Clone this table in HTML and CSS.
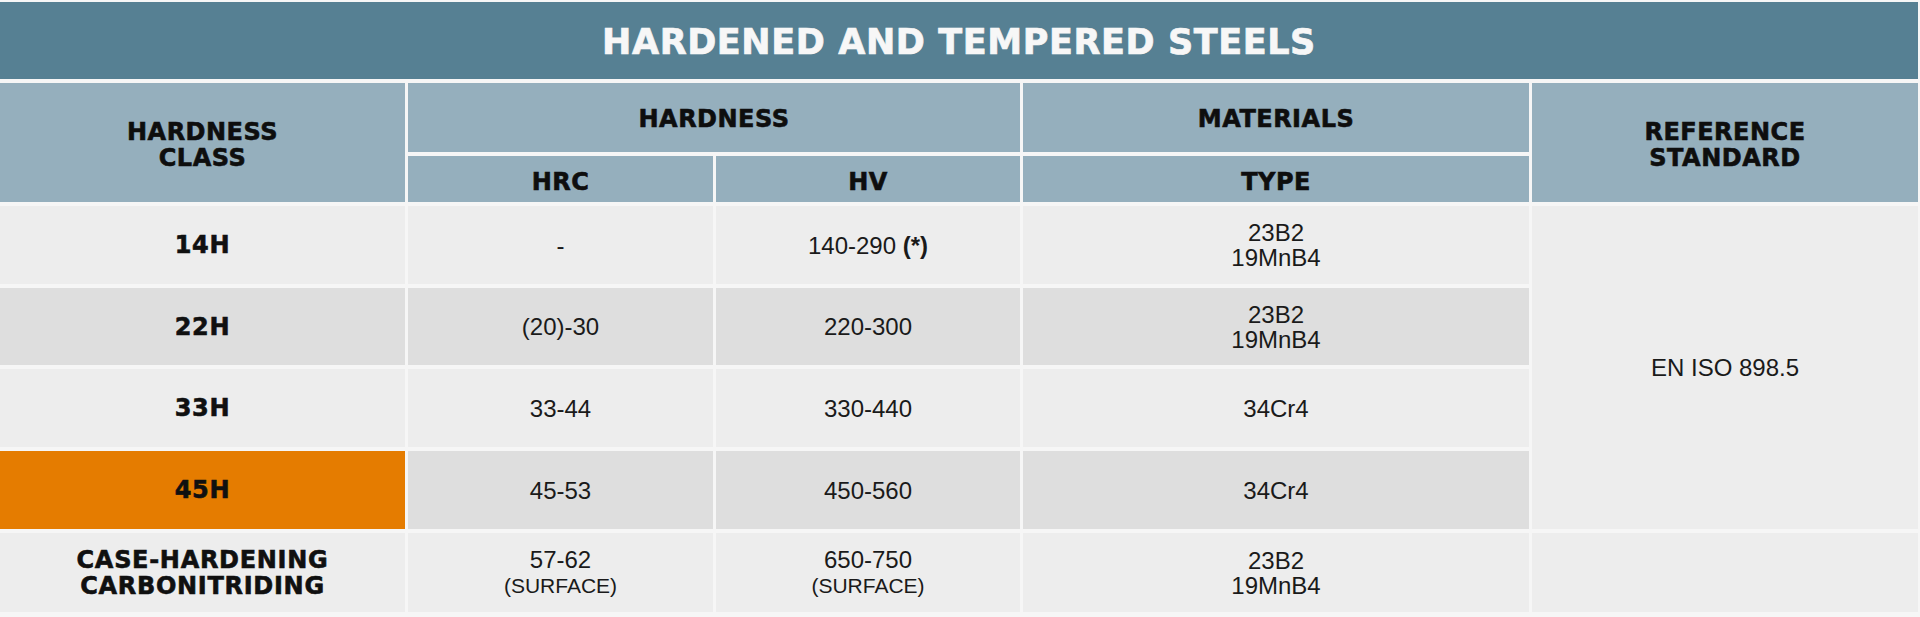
FILE: index.html
```html
<!DOCTYPE html>
<html lang="en">
<head>
<meta charset="utf-8">
<title>Hardened and Tempered Steels</title>
<link rel="stylesheet" href="styles.css">
</head>
<body>
<div class="sheet">
  <div class="title"><span>HARDENED AND TEMPERED STEELS</span></div>
  <div class="grid">
    <div class="cell head span-h2"><p>HARDNESS<br>CLASS</p></div>
    <div class="cell head span-c2"><p>HARDNESS</p></div>
    <div class="cell head"><p>MATERIALS</p></div>
    <div class="cell head span-h2"><p>REFERENCE<br>STANDARD</p></div>
    <div class="cell head sub"><p>HRC</p></div>
    <div class="cell head sub"><p>HV</p></div>
    <div class="cell head sub"><p>TYPE</p></div>

    <div class="cell light cls"><p>14H</p></div>
    <div class="cell light val"><p>-</p></div>
    <div class="cell light val"><p>140-290 <b>(*)</b></p></div>
    <div class="cell light val"><p>23B2<br>19MnB4</p></div>
    <div class="cell light val std"><p>EN ISO 898.5</p></div>

    <div class="cell dark cls"><p>22H</p></div>
    <div class="cell dark val"><p>(20)-30</p></div>
    <div class="cell dark val"><p>220-300</p></div>
    <div class="cell dark val"><p>23B2<br>19MnB4</p></div>

    <div class="cell light cls"><p>33H</p></div>
    <div class="cell light val"><p>33-44</p></div>
    <div class="cell light val"><p>330-440</p></div>
    <div class="cell light val"><p>34Cr4</p></div>

    <div class="cell orange cls"><p>45H</p></div>
    <div class="cell dark val"><p>45-53</p></div>
    <div class="cell dark val"><p>450-560</p></div>
    <div class="cell dark val"><p>34Cr4</p></div>

    <div class="cell light cls"><p>CASE-HARDENING<br>CARBONITRIDING</p></div>
    <div class="cell light val"><p>57-62<br><span class="small">(SURFACE)</span></p></div>
    <div class="cell light val"><p>650-750<br><span class="small">(SURFACE)</span></p></div>
    <div class="cell light val"><p>23B2<br>19MnB4</p></div>
    <div class="cell light"></div>
  </div>
</div>
</body>
</html>
```

FILE: styles.css
```css
html, body {
  margin: 0;
  padding: 0;
  background: #f6f6f6;
}

.sheet {
  width: 1918px;
  padding-top: 2px;
}

.title {
  height: 77px;
  background: #568093;
  color: #f7f7f7;
  font-family: "DejaVu Sans", sans-serif;
  font-weight: bold;
  font-size: 35px;
  letter-spacing: 0.6px;
  -webkit-text-stroke: 0.7px #f7f7f7;
  display: flex;
  align-items: center;
  justify-content: center;
  margin-bottom: 4px;
  padding-top: 3px;
  box-sizing: border-box;
}

.grid {
  display: grid;
  grid-template-columns: 405px 305px 304px 506px 386px;
  grid-template-rows: 69px 46px 78px 77px 78px 78px 79px;
  column-gap: 3px;
  row-gap: 4px;
}

.cell {
  display: flex;
  align-items: center;
  justify-content: center;
  text-align: center;
  color: #161616;
}

.cell p {
  margin: 0;
}

.head {
  background: #95afbd;
  font-family: "DejaVu Sans", sans-serif;
  font-weight: bold;
  font-size: 24px;
  line-height: 26px;
  letter-spacing: 0.5px;
  color: #0e0e0e;
  -webkit-text-stroke: 0.6px #0e0e0e;
  padding-top: 2px;
  box-sizing: border-box;
}

.head.sub {
  padding-top: 6px;
}

.span-h2 {
  grid-row: span 2;
  padding-top: 4px;
}

.span-c2 {
  grid-column: span 2;
}

.light {
  background: #ededed;
}

.dark {
  background: #dedede;
}

.orange {
  background: #e57c00;
}

.cls {
  font-family: "DejaVu Sans", sans-serif;
  font-weight: bold;
  font-size: 24px;
  line-height: 26px;
  letter-spacing: 0.7px;
  color: #101010;
  -webkit-text-stroke: 0.6px #101010;
}

.val {
  font-family: "Liberation Sans", Arial, sans-serif;
  font-size: 24px;
  line-height: 25px;
  color: #1a1a1a;
}

.val b {
  font-weight: bold;
}

.small {
  font-size: 21px;
}

.std {
  grid-column: 5;
  grid-row: 3 / span 4;
}
```
